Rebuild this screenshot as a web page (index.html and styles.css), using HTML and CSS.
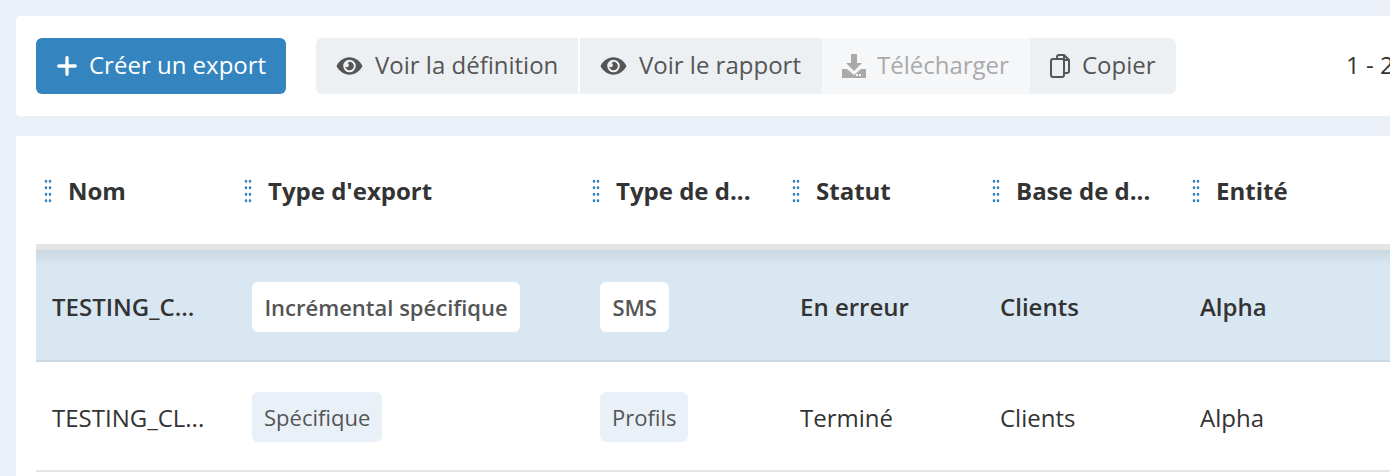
FILE: index.html
```html
<!DOCTYPE html>
<html lang="fr">
<head>
<meta charset="utf-8">
<title>Exports</title>
<link rel="stylesheet" href="styles.css">
</head>
<body>
<section class="toolbar">
  <button class="btn-primary">
    <svg class="icon" viewBox="0 0 24 24"><path d="M12 3v18M3 12h18" stroke="currentColor" stroke-width="3.6" stroke-linecap="round" fill="none"/></svg>
    <span class="label">Créer un export</span>
  </button>
  <div class="btn-group">
    <button class="btn btn-first">
      <svg class="icon" viewBox="0 0 28 20"><path fill-rule="evenodd" fill="currentColor" d="M14 1C8 1 3 5 .5 10 3 15 8 19 14 19s11-4 13.500-9C25 5 20 1 14 1zm0 2.500a6.500 6.500 0 1 1 0 13 6.500 6.500 0 0 1 0-13z"/><path fill-rule="evenodd" fill="currentColor" d="M14 5.500a4.500 4.500 0 1 1-4.500 4.500c0 .8 1 1.300 1.800 1.300a2 2 0 0 0 2-2c0-1-.6-1.500-1-2.300A4.500 4.500 0 0 1 14 5.500z"/></svg>
      <span class="label">Voir la définition</span>
    </button>
    <button class="btn btn-sep">
      <svg class="icon" viewBox="0 0 28 20"><path fill-rule="evenodd" fill="currentColor" d="M14 1C8 1 3 5 .5 10 3 15 8 19 14 19s11-4 13.500-9C25 5 20 1 14 1zm0 2.500a6.500 6.500 0 1 1 0 13 6.500 6.500 0 0 1 0-13z"/><path fill-rule="evenodd" fill="currentColor" d="M14 5.500a4.500 4.500 0 1 1-4.500 4.500c0 .8 1 1.300 1.800 1.300a2 2 0 0 0 2-2c0-1-.6-1.500-1-2.300A4.500 4.500 0 0 1 14 5.500z"/></svg>
      <span class="label">Voir le rapport</span>
    </button>
    <button class="btn btn-disabled">
      <svg class="icon icon-dl" viewBox="0 0 24 24"><path fill="currentColor" d="M9 0h6v9h5l-8 8-8-8h5z"/><path fill="currentColor" fill-rule="evenodd" d="M0 15h5l7 6 7-6h5v9H0zm14 5v2h2v-2zm3 0v2h2v-2z"/></svg>
      <span class="label">Télécharger</span>
    </button>
    <button class="btn btn-last">
      <svg class="icon icon-copy" viewBox="0 0 20 24"><path fill="none" stroke="currentColor" stroke-width="2" stroke-linejoin="round" d="M7 4V3a2 2 0 0 1 2-2h5l5 5v11a2 2 0 0 1-2 2h-3M14 1v5h5"/><path fill="none" stroke="currentColor" stroke-width="2" stroke-linejoin="round" d="M3 5h9a2 2 0 0 1 2 2v14a2 2 0 0 1-2 2H3a2 2 0 0 1-2-2V7a2 2 0 0 1 2-2z"/></svg>
      <span class="label">Copier</span>
    </button>
  </div>
  <span class="pager label">1 - 2</span>
</section>

<section class="table-card">
  <div class="table">
    <div class="row head">
      <div class="cell"><span class="grip"></span><span class="title">Nom</span></div>
      <div class="cell"><span class="grip"></span><span class="title">Type d'export</span></div>
      <div class="cell"><span class="grip"></span><span class="title">Type de d...</span></div>
      <div class="cell"><span class="grip"></span><span class="title">Statut</span></div>
      <div class="cell"><span class="grip"></span><span class="title">Base de d...</span></div>
      <div class="cell"><span class="grip"></span><span class="title">Entité</span></div>
    </div>
    <div class="row body-row selected">
      <div class="cell">TESTING_C...</div>
      <div class="cell"><span class="tag">Incrémental spécifique</span></div>
      <div class="cell"><span class="tag">SMS</span></div>
      <div class="cell">En erreur</div>
      <div class="cell">Clients</div>
      <div class="cell">Alpha</div>
    </div>
    <div class="row body-row">
      <div class="cell">TESTING_CL...</div>
      <div class="cell"><span class="tag">Spécifique</span></div>
      <div class="cell"><span class="tag">Profils</span></div>
      <div class="cell">Terminé</div>
      <div class="cell">Clients</div>
      <div class="cell">Alpha</div>
    </div>
  </div>
</section>
</body>
</html>
```
FILE: styles.css
```css
* { box-sizing: border-box; }
html, body { margin: 0; height: 476px; overflow: hidden; }
body {
  background: #ebf0f8;
  padding: 16px 0 0 16px;
  font-family: "Open Sans", "Noto Sans", sans-serif;
  color: #333;
  width: 1390px;
}
button { font: inherit; border: 0; cursor: pointer; }
.toolbar {
  display: flex;
  align-items: center;
  height: 100px;
  padding-left: 20px;
  background: #fff;
  border-radius: 4px 0 0 4px;
  white-space: nowrap;
  overflow: hidden;
}
.icon { flex: none; }
.label { margin-bottom: 3px; }
.btn-primary {
  display: flex;
  flex: none;
  align-items: center;
  gap: 11px;
  height: 56px;
  width: 250px;
  padding-left: 20px;
  background: #3484c0;
  color: #fff;
  border-radius: 6px;
  font-size: 24px;
}
.btn-primary .icon { width: 22px; height: 22px; }
.btn-group { display: flex; flex: none; margin-left: 30px; height: 56px; }
.btn {
  display: flex;
  flex: none;
  align-items: center;
  gap: 12px;
  padding: 0 20px;
  background: #edf0f3;
  color: #555;
  font-size: 24px;
}
.btn .icon { width: 27px; height: 20px; }
.btn-first { border-radius: 6px 0 0 6px; width: 262px; }
.btn-sep { margin-left: 2px; width: 242px; }
.btn-disabled { background: #f6f7f9; color: #aaa; width: 208px; gap: 11px; }
.btn .icon-dl { width: 24px; height: 24px; }
.btn-last { border-radius: 0 6px 6px 0; width: 146px; gap: 12px; }
.btn .icon-copy { width: 20px; height: 24px; }
.pager { margin-left: 170px; font-size: 24px; color: #333; }
.table-card {
  margin-top: 20px;
  height: 340px;
  padding-left: 20px;
  background: #fff;
  overflow: hidden;
}
.row {
  display: grid;
  grid-template-columns: 200px 348px 200px 200px 200px 200px;
  align-items: center;
}
.head { height: 114px; border-bottom: 6px solid #e5e5e5; }
.head .cell { padding-left: 8px; display: flex; align-items: center; gap: 16px; height: 108px; font-weight: 700; font-size: 24px; }
.title { white-space: nowrap; }
.grip {
  width: 8px;
  height: 26px;
  flex: none;
  margin-top: 2px;
  background-image: radial-gradient(circle, #3484c0 1.300px, transparent 1.600px);
  background-size: 4px 6.500px;
}
.body-row { font-size: 24px; height: 110px; border-bottom: 2px solid #e3e6e9; padding-top: 2px; }
.body-row .cell { padding-left: 16px; white-space: nowrap; }
.selected { background: linear-gradient(#cbd8e1, #d9e7f3 16px); border-bottom-color: #cbd8e1; height: 112px; font-weight: 600; }
.tag {
  display: inline-block;
  height: 50px;
  line-height: 50px;
  padding: 0 12px;
  border-radius: 6px;
  background: #e9f0f7;
  color: #555;
  font-size: 22px;
}
.selected .tag { background: #fff; margin-top: 2px; padding: 0 12.400px; }
```
